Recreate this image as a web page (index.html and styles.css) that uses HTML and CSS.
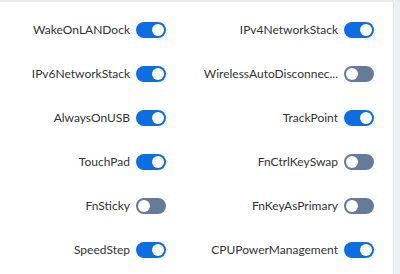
FILE: index.html
```html
<!DOCTYPE html>
<html lang="en">
<head>
    <meta charset="UTF-8">
    <meta name="viewport" content="width=device-width, initial-scale=1.0">
    <title>BIOS Settings</title>
    <link rel="stylesheet" href="styles.css">
</head>
<body>
    <div class="page">
        <div class="panel">
            <div class="settings-grid">
                <div class="setting"><span class="label">WakeOnLANDock</span><span class="switch on"></span></div>
                <div class="setting"><span class="label">IPv4NetworkStack</span><span class="switch on"></span></div>
                <div class="setting"><span class="label">IPv6NetworkStack</span><span class="switch on"></span></div>
                <div class="setting"><span class="label" title="WirelessAutoDisconnection">WirelessAutoDisconnec...</span><span class="switch"></span></div>
                <div class="setting"><span class="label">AlwaysOnUSB</span><span class="switch on"></span></div>
                <div class="setting"><span class="label">TrackPoint</span><span class="switch on"></span></div>
                <div class="setting"><span class="label">TouchPad</span><span class="switch on"></span></div>
                <div class="setting"><span class="label">FnCtrlKeySwap</span><span class="switch"></span></div>
                <div class="setting"><span class="label">FnSticky</span><span class="switch"></span></div>
                <div class="setting"><span class="label">FnKeyAsPrimary</span><span class="switch"></span></div>
                <div class="setting"><span class="label">SpeedStep</span><span class="switch on"></span></div>
                <div class="setting"><span class="label">CPUPowerManagement</span><span class="switch on"></span></div>
            </div>
        </div>
        <div class="scroll-strip"></div>
    </div>
</body>
</html>
```

FILE: styles.css
```css
body {
    font-family: 'Lato', 'Liberation Sans', sans-serif;
    background-color: #fff;
    margin: 0;
    padding: 0;
}
.page {
    display: flex;
    height: 274px;
    border-top: 2px solid #e8ecf0;
    box-sizing: border-box;
}
.panel {
    width: 393px;
    flex-shrink: 0;
}
.scroll-strip {
    flex-grow: 1;
    background-color: #eef1f4;
    border-left: 1px solid #dde2e7;
}
.settings-grid {
    display: grid;
    grid-template-columns: 166px 174px;
    column-gap: 34px;
    row-gap: 28px;
    padding-top: 20px;
}
.setting {
    display: flex;
    align-items: center;
    justify-content: flex-end;
    gap: 6px;
    height: 16px;
    min-width: 0;
}
.label {
    font-size: 12px;
    color: #333;
    white-space: nowrap;
    position: relative;
    top: -1px;
}
.switch {
    flex-shrink: 0;
    position: relative;
    width: 30px;
    height: 16px;
    border-radius: 8px;
    background-color: #647b99;
}
.switch::after {
    content: "";
    position: absolute;
    top: 2px;
    left: 2px;
    width: 12px;
    height: 12px;
    border-radius: 50%;
    background-color: #fff;
}
.switch.on {
    background-color: #0b6fe3;
}
.switch.on::after {
    left: 16px;
}
```
